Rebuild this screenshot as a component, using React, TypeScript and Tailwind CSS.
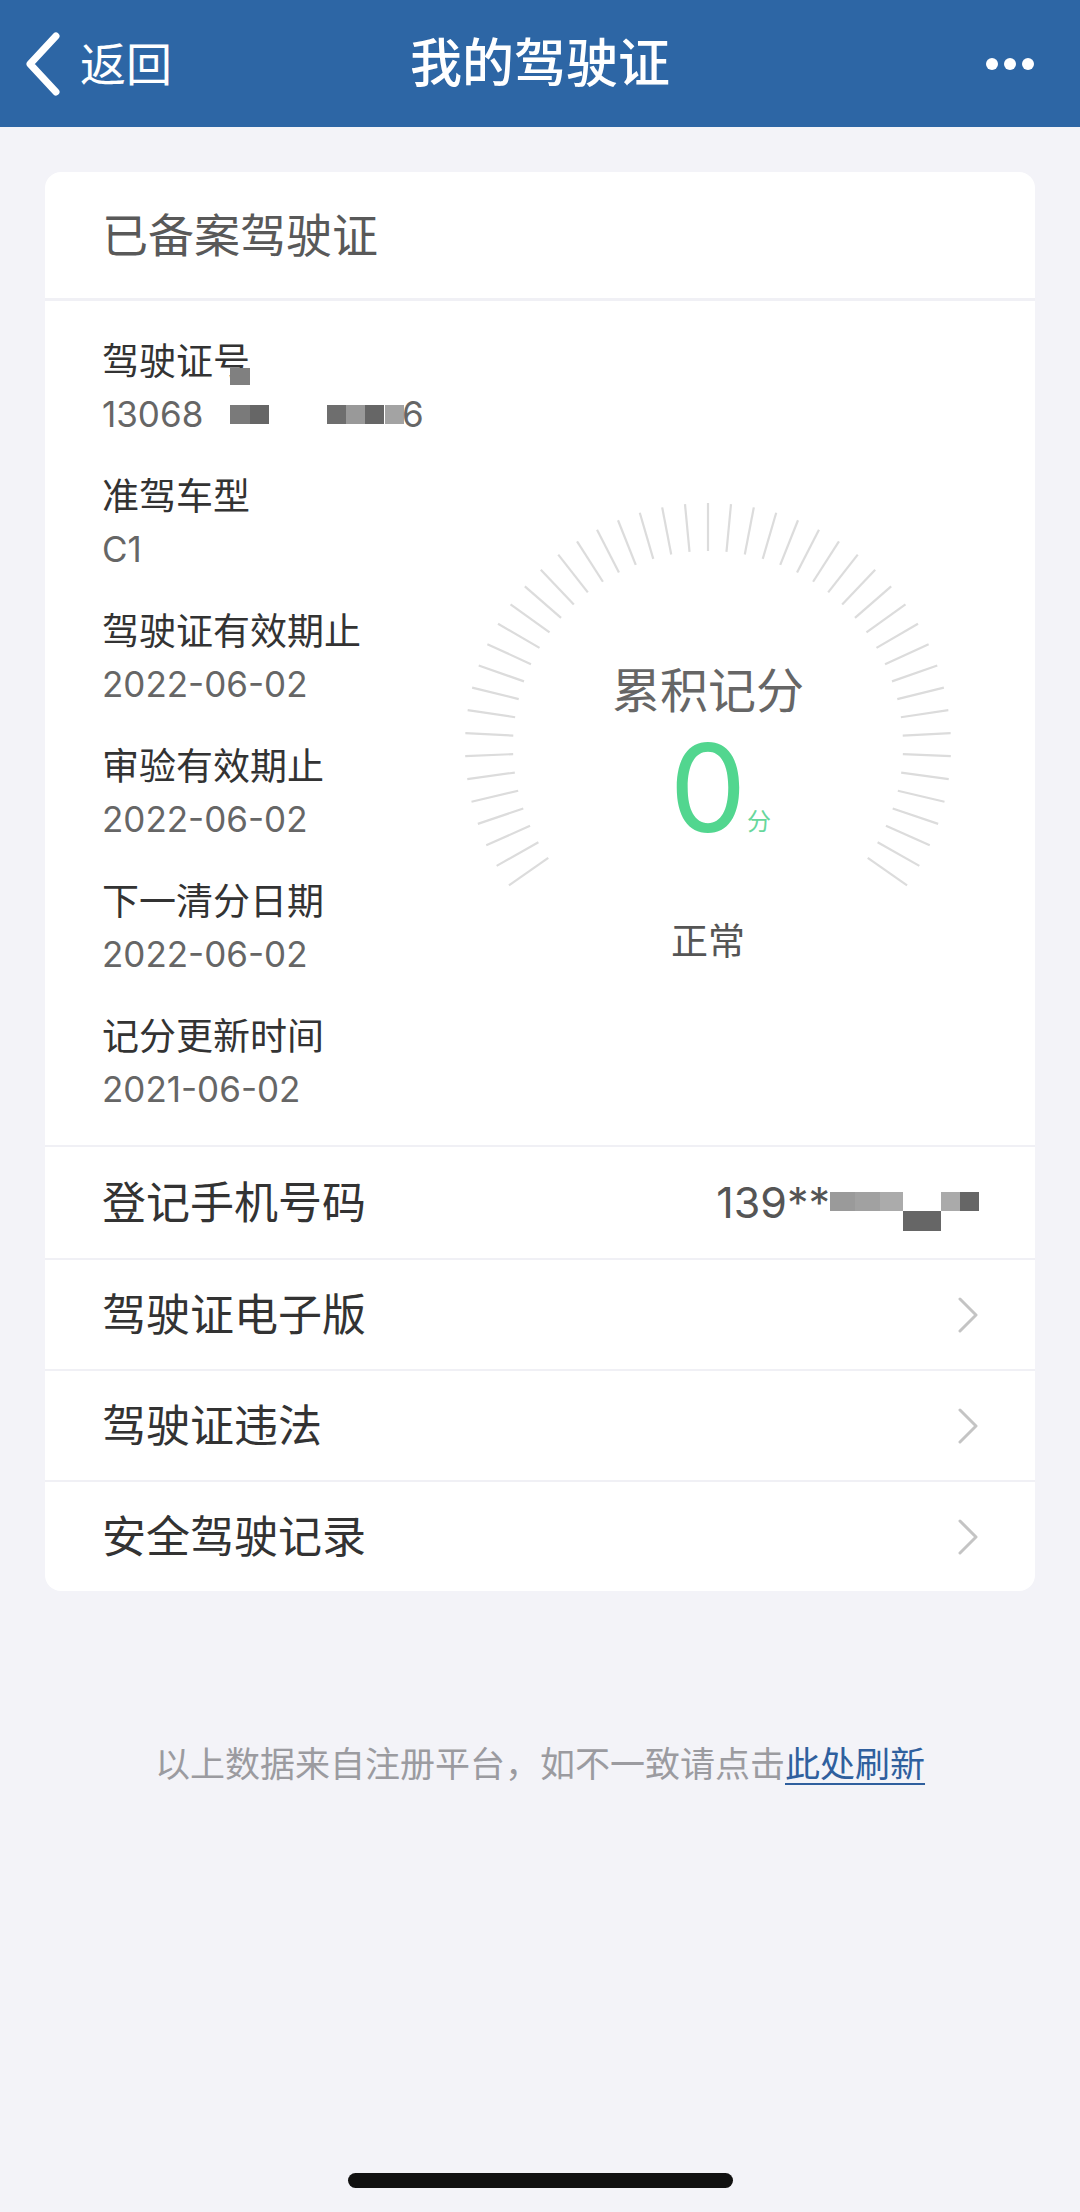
import React from "react";

const font = { fontFamily: 'Inter, "Noto Sans CJK SC", sans-serif' };

const infoItems = [
  { label: "驾驶证号", value: "13068", masked: true },
  { label: "准驾车型", value: "C1" },
  { label: "驾驶证有效期止", value: "2022-06-02" },
  { label: "审验有效期止", value: "2022-06-02" },
  { label: "下一清分日期", value: "2022-06-02" },
  { label: "记分更新时间", value: "2021-06-02" },
];

function Gauge() {
  const count = 47;
  const start = 145;
  const span = 250;
  const ticks = Array.from({ length: count }, (_, i) => {
    const a = ((start + (span * i) / (count - 1)) * Math.PI) / 180;
    return {
      x1: 250 + 195 * Math.cos(a),
      y1: 250 + 195 * Math.sin(a),
      x2: 250 + 243 * Math.cos(a),
      y2: 250 + 243 * Math.sin(a),
    };
  });

  return (
    <div className="relative w-[500px] h-[500px] shrink-0 mt-[195px] mr-[77px]">
      <svg className="absolute inset-0" width="500" height="500" viewBox="0 0 500 500">
        {ticks.map((t, i) => (
          <line key={i} x1={t.x1} y1={t.y1} x2={t.x2} y2={t.y2} stroke="#dcdcdc" strokeWidth="2.2" />
        ))}
      </svg>
      <div className="absolute inset-x-0 top-[166px] text-center text-[48px] leading-[58px] text-[#666]">累积记分</div>
      <div className="absolute inset-x-0 top-[222px] text-center text-[122px] leading-[140px] text-[#52d68f]">0</div>
      <div className="absolute left-[289px] top-[310px] text-[24px] leading-[32px] text-[#67d79c]">分</div>
      <div className="absolute inset-x-0 top-[421px] text-center text-[37px] leading-[50px] text-[#555]">正常</div>
    </div>
  );
}

function Chevron() {
  return (
    <svg width="22" height="36" viewBox="0 0 22 36" fill="none">
      <path d="M3 2 L19 18 L3 34" stroke="#c4c4c4" strokeWidth="3" strokeLinecap="round" strokeLinejoin="round" />
    </svg>
  );
}

export default function App() {
  return (
    <div style={font} className="flex flex-col h-[2212px] bg-[#f3f3f8]">
      {/* nav bar */}
      <div className="relative flex items-center h-[127px] bg-[#2d66a5] text-white shrink-0">
        <div className="flex items-center pl-[22px]">
          <svg width="42" height="64" viewBox="0 0 42 64" fill="none">
            <path d="M34 4 L8 32 L34 60" stroke="white" strokeWidth="7" strokeLinecap="round" strokeLinejoin="round" />
          </svg>
          <span className="ml-[16px] text-[46px] leading-[60px]">返回</span>
        </div>
        <div className="absolute inset-x-0 text-center text-[52px] leading-[60px] font-medium pointer-events-none">我的驾驶证</div>
        <div className="ml-auto mr-[46px] flex gap-[6px]">
          <span className="w-[12px] h-[12px] rounded-full bg-white" />
          <span className="w-[12px] h-[12px] rounded-full bg-white" />
          <span className="w-[12px] h-[12px] rounded-full bg-white" />
        </div>
      </div>

      {/* card */}
      <div className="mx-[45px] mt-[45px] rounded-[16px] bg-white overflow-hidden">
        <div className="h-[129px] flex items-center pl-[57px] border-b-[3px] border-[#f0f0f5] text-[46px] text-[#595959]">
          已备案驾驶证
        </div>

        <div className="flex">
          <div className="flex-1 pl-[57px] pt-[35px] pb-[30px] flex flex-col gap-[31px]">
            {infoItems.map((item) => (
              <div key={item.label}>
                <div className="h-[52px] leading-[52px] text-[37px] text-[#333]">{item.label}</div>
                <div className="relative h-[52px] leading-[52px] text-[35px] text-[#666]">
                  {item.value}
                  {item.masked && (
                    <>
                      <span className="absolute left-[128px] top-[-20px] w-[20px] h-[17px] bg-[#808080]" />
                      <span className="absolute left-[128px] top-[17px] w-[20px] h-[19px] bg-[#7a7a7a]" />
                      <span className="absolute left-[148px] top-[17px] w-[19px] h-[19px] bg-[#666]" />
                      <span className="absolute left-[225px] top-[17px] w-[19px] h-[19px] bg-[#6e6e6e]" />
                      <span className="absolute left-[244px] top-[17px] w-[19px] h-[19px] bg-[#999]" />
                      <span className="absolute left-[263px] top-[17px] w-[19px] h-[19px] bg-[#666]" />
                      <span className="absolute left-[283px] top-[17px] w-[19px] h-[19px] bg-[#a3a3a3]" />
                      <span className="absolute left-[300px] top-0 text-[35px] text-[#666]">6</span>
                    </>
                  )}
                </div>
              </div>
            ))}
          </div>
          <Gauge />
        </div>

        <div className="h-[113px] border-t-2 border-[#f0f0f5] flex items-center pl-[57px] pr-[56px]">
          <span className="text-[44px] text-[#333]">登记手机号码</span>
          <div className="ml-auto flex items-center">
            <span className="text-[43px] text-[#555]">139**</span>
            <div className="flex items-start h-[39px] translate-y-[9px]">
              <span className="w-[25px] h-[19px] bg-[#9a9a9a]" />
              <span className="w-[25px] h-[19px] bg-[#a1a1a1]" />
              <span className="w-[23px] h-[19px] bg-[#ababab]" />
              <span className="w-[38px] h-[20px] mt-[19px] bg-[#666]" />
              <span className="w-[19px] h-[19px] bg-[#aaa]" />
              <span className="w-[19px] h-[19px] bg-[#666]" />
            </div>
          </div>
        </div>
        {["驾驶证电子版", "驾驶证违法", "安全驾驶记录"].map((t) => (
          <div key={t} className="h-[111px] border-t-2 border-[#f0f0f5] flex items-center justify-between pl-[57px] pr-[56px]">
            <span className="text-[44px] text-[#333]">{t}</span>
            <Chevron />
          </div>
        ))}
      </div>

      <div className="mt-[148px] text-center text-[35px] leading-[50px] text-[#9b9ba0]">
        以上数据来自注册平台，如不一致请点击
        <span className="text-[#2f5f9e] underline underline-offset-[6px] decoration-2">此处刷新</span>
      </div>

      <div className="mt-auto mb-[24px] mx-auto w-[385px] h-[15px] rounded-full bg-[#111]" />
    </div>
  );
}
